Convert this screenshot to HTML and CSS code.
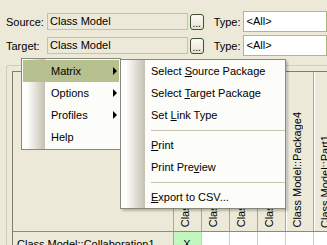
FILE: index.html
```html
<!DOCTYPE html>
<html lang="en">
<head>
  <meta charset="UTF-8" />
  <title>Relationship Matrix</title>
  <link rel="stylesheet" href="styles.css">
</head>
<body>
  <div class="form">
    <div class="row">
      <span class="label">Source:</span>
      <div class="field">Class Model</div>
      <button class="dots">...</button>
      <span class="type-label">Type:</span>
      <div class="combo">&lt;All&gt;</div>
    </div>
    <div class="row">
      <span class="label">Target:</span>
      <div class="field">Class Model</div>
      <button class="dots">...</button>
      <span class="type-label">Type:</span>
      <div class="combo">&lt;All&gt;</div>
    </div>
  </div>

  <div class="group">
    <div class="grid">
      <table>
        <tr class="head">
          <th class="corner"></th>
          <th><span>Class Model::Class1</span></th>
          <th><span>Class Model::Class2</span></th>
          <th><span>Class Model::Class3</span></th>
          <th><span>Class Model::Class4</span></th>
          <th class="raised"><span>Class Model::Package4</span></th>
          <th class="raised"><span>Class Model::Part1</span></th>
        </tr>
        <tr>
          <td class="rowhead">Class Model::Collaboration1</td>
          <td class="hit">X</td>
          <td></td>
          <td></td>
          <td></td>
          <td></td>
          <td></td>
        </tr>
      </table>
    </div>
  </div>

  <!-- context menu -->
  <div class="menu main-menu">
    <div class="item active">Matrix<i class="arrow"></i></div>
    <div class="item">Options<i class="arrow"></i></div>
    <div class="item">Profiles<i class="arrow"></i></div>
    <div class="item">Help</div>
  </div>

  <div class="menu sub-menu">
    <div class="item">Select <u>S</u>ource Package</div>
    <div class="item">Select <u>T</u>arget Package</div>
    <div class="item">Set <u>L</u>ink Type</div>
    <div class="sep"></div>
    <div class="item"><u>P</u>rint</div>
    <div class="item">Print Pre<u>v</u>iew</div>
    <div class="sep"></div>
    <div class="item"><u>E</u>xport to CSV...</div>
  </div>
</body>
</html>
```

FILE: styles.css
```css
body {
  margin: 0;
  background: #ece9d8;
  font-family: "Liberation Sans", Arial, sans-serif;
  font-size: 11px;
  color: #000;
  overflow: hidden;
  width: 327px;
  height: 245px;
}

.form {
  padding-top: 11px;
}

.row {
  display: flex;
  align-items: center;
  height: 21px;
  margin-bottom: 3px;
  white-space: nowrap;
}

.label {
  width: 44px;
  padding-left: 6px;
}

.field {
  box-sizing: border-box;
  width: 150px;
  height: 17px;
  line-height: 15px;
  padding-left: 2px;
  border: 1px solid #c3c0ad;
  background: #ece9d8;
}

.dots {
  box-sizing: border-box;
  margin: 0 0 0 2px;
  width: 15px;
  height: 16px;
  padding: 0;
  border: 1px solid #3f4f2a;
  border-radius: 3px;
  background: linear-gradient(#fbfbf6, #e6e3d3);
  font: inherit;
  font-size: 10px;
  line-height: 17px;
  color: #000;
}

.type-label {
  width: 31px;
  margin-left: 10px;
}

.combo {
  box-sizing: border-box;
  width: 90px;
  height: 21px;
  line-height: 19px;
  padding-left: 3px;
  border: 1px solid #a7bb82;
  background: #fff;
}

.group {
  margin: 9px 0 0 6px;
  width: 400px;
  height: 200px;
  padding: 5px 0 0 5px;
  border: 1px solid #d0cfbf;
  border-right: none;
  border-radius: 3px 0 0 0;
}

.grid {
  border-left: 1px solid #7f7d72;
  border-top: 1px solid #7f7d72;
  height: 100%;
}

table {
  border-collapse: collapse;
  table-layout: fixed;
}

th {
  box-sizing: border-box;
  width: 28px;
  height: 159px;
  padding: 0 0 3px 5px;
  vertical-align: bottom;
  text-align: left;
  font-weight: normal;
  border-right: 1px solid #aca899;
  border-bottom: 1px solid #8c8a7e;
  background: #ece9d8;
}

th.corner {
  width: 160px;
  padding: 0;
}

th.raised {
  box-shadow: inset 1px 0 0 #fff;
}

th span {
  display: block;
  writing-mode: vertical-rl;
  transform: rotate(180deg);
  line-height: 13px;
  white-space: nowrap;
}

td {
  height: 13px;
  padding: 5px 0 0;
  vertical-align: top;
  line-height: 14px;
  background: #fff;
  border-right: 1px solid #cfcdc2;
  text-align: center;
}

td.rowhead {
  padding-left: 4px;
  text-align: left;
  background: #ece9d8;
  border-right: 1px solid #aca899;
  white-space: nowrap;
}

td.hit {
  background: #c2f7c0;
}

.menu {
  position: absolute;
  box-sizing: border-box;
  border: 1px solid #8a877c;
  background: #fcfcf9;
  white-space: nowrap;
}

.main-menu {
  left: 21px;
  top: 58px;
  width: 100px;
  padding: 1px;
  background: linear-gradient(to right, #fefefd 5px, #c4c1b1 23px, #fcfcf9 23px);
  z-index: 2;
}

.sub-menu {
  left: 120px;
  top: 59px;
  width: 166px;
  padding: 0;
  background: linear-gradient(to right, #fefefd 5px, #c4c1b1 24px, #fcfcf9 24px);
  box-shadow: 2px 2px 2px rgba(0, 0, 0, 0.22);
  z-index: 3;
}

.item {
  position: relative;
  height: 22px;
  line-height: 22px;
}

.main-menu .item {
  padding-left: 28px;
}

.sub-menu .item {
  padding-left: 30px;
}

.item.active {
  background: #b6c18f;
}

.arrow {
  position: absolute;
  right: 2px;
  top: 7px;
  width: 0;
  height: 0;
  border-left: 4px solid #000;
  border-top: 4px solid transparent;
  border-bottom: 4px solid transparent;
}

.sep {
  height: 8px;
  margin-left: 30px;
  background: linear-gradient(transparent 4px, #c5c2b2 4px, #c5c2b2 5px, transparent 5px);
}
```
